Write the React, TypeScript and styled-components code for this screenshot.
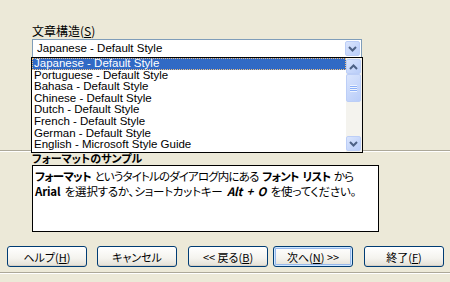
import React from 'react'
import styled, { createGlobalStyle } from 'styled-components'

const GlobalStyle = createGlobalStyle`
	html, body {
		margin: 0;
		padding: 0;
		background: #ece9d8;
	}
	body {
		font-family: 'Liberation Sans', 'Noto Sans CJK JP', sans-serif;
		font-size: 12px;
		color: #000;
	}
`

const styles = [
	'Japanese - Default Style',
	'Portuguese - Default Style',
	'Bahasa - Default Style',
	'Chinese - Default Style',
	'Dutch - Default Style',
	'French - Default Style',
	'German - Default Style',
	'English - Microsoft Style Guide'
]

const Chevron = ({ up }: { up?: boolean }) => (
	<svg width="9" height="6" viewBox="0 0 9 6">
		<path
			d={up ? 'M1 5 L4.5 1.5 L8 5' : 'M1 1 L4.5 4.5 L8 1'}
			fill="none"
			stroke="#4d6185"
			strokeWidth="2"
		/>
	</svg>
)

export default function App() {
	return (
		<Page>
			<GlobalStyle />
			<FieldLabel>
				文章構造(<u>S</u>)
			</FieldLabel>
			<Combo>
				<ComboText>Japanese - Default Style</ComboText>
				<ScrollButton>
					<Chevron />
				</ScrollButton>
				<DropList>
					<Items>
						{styles.map((s, i) => (
							<Item key={s} $selected={i === 0}>
								{s}
							</Item>
						))}
					</Items>
					<ScrollBar>
						<ScrollButton>
							<Chevron up />
						</ScrollButton>
						<Thumb>
							<Grip />
						</Thumb>
						<Track />
						<ScrollButton>
							<Chevron />
						</ScrollButton>
					</ScrollBar>
				</DropList>
			</Combo>
			<Separator $top={92} />
			<SampleLabel>フォーマットのサンプル</SampleLabel>
			<SampleBox>
				<SampleLine $tracking={-0.85}>
					<b>フォーマット</b> というタイトルのダイアログ内にある <b>フォント リスト</b> から
				</SampleLine>
				<SampleLine $tracking={-0.2}>
					<b>Arial</b> を選択するか、ショートカットキー <b><i>Alt + O</i></b> を使ってください。
				</SampleLine>
			</SampleBox>
			<ButtonRow>
				<Button>
					ヘルプ(<u>H</u>)
				</Button>
				<Button>キャンセル</Button>
				<ButtonGroup>
					<Button>
						&lt;&lt; 戻る(<u>B</u>)
					</Button>
					<Button $default>
						次へ(<u>N</u>) &gt;&gt;
					</Button>
				</ButtonGroup>
				<Button>
					終了(<u>F</u>)
				</Button>
			</ButtonRow>
			<Separator $top={5} />
		</Page>
	)
}

const Page = styled.div`
	width: 450px;
	height: 282px;
	overflow: hidden;
	padding-top: 24px;
	box-sizing: border-box;
	display: flex;
	flex-direction: column;
`

const FieldLabel = styled.div`
	margin-left: 32px;
	height: 14px;
	line-height: 14px;
	font-family: 'Noto Sans CJK JP', sans-serif;
	font-size: 12px;
`

const Combo = styled.div`
	position: relative;
	margin: 1px 0 0 32px;
	width: 330px;
	height: 19px;
	box-sizing: border-box;
	border: 1px solid #7f9db9;
	background: #fff;
	display: flex;
	align-items: center;
	padding: 1px;
`

const ComboText = styled.div`
	flex: 1;
	padding-left: 3px;
	font-size: 11.5px;
	line-height: 15px;
`

const ScrollButton = styled.div`
	width: 15px;
	height: 15px;
	box-sizing: border-box;
	border: 1px solid #bccef7;
	border-radius: 2px;
	background: linear-gradient(135deg, #dae5fd, #b9cdf9);
	display: flex;
	align-items: center;
	justify-content: center;
	flex: none;
`

const DropList = styled.div`
	position: absolute;
	top: 17px;
	left: -2px;
	width: 332px;
	height: 96px;
	box-sizing: border-box;
	border: 1px solid #000;
	background: #fff;
	display: flex;
	z-index: 2;
`

const Items = styled.div`
	flex: 1;
	overflow: hidden;
`

const Item = styled.div<{ $selected?: boolean }>`
	height: 11.6px;
	line-height: 11.6px;
	font-size: 11.5px;
	padding-left: 2px;
	white-space: nowrap;
	background: ${p => (p.$selected ? '#316ac5' : 'transparent')};
	color: ${p => (p.$selected ? '#fff' : '#000')};
	outline: ${p => (p.$selected ? '1px dotted #f0c080' : 'none')};
	outline-offset: -1px;
`

const ScrollBar = styled.div`
	width: 16px;
	padding: 1px 1px 1px 0;
	box-sizing: border-box;
	background: #f4f3ee;
	display: flex;
	flex-direction: column;
`

const Thumb = styled(ScrollButton)`
	height: 28px;
`

const Grip = styled.div`
	width: 7px;
	height: 7px;
	background: repeating-linear-gradient(
		to bottom,
		#eef4fe 0,
		#eef4fe 1px,
		#8cb0f8 1px,
		#8cb0f8 2px
	);
`

const Track = styled.div`
	flex: 1;
`

const Separator = styled.div<{ $top: number }>`
	margin-top: ${p => p.$top}px;
	border-top: 1px solid #aca899;
	border-bottom: 1px solid #fff;
	height: 0;
`

const SampleLabel = styled.div`
	margin-left: 32px;
	height: 12px;
	line-height: 12px;
	font-family: 'Noto Sans CJK JP', sans-serif;
	font-weight: bold;
	font-size: 11px;
	font-feature-settings: 'palt';
`

const SampleBox = styled.div`
	margin: 1px 0 0 32px;
	width: 347px;
	height: 67px;
	box-sizing: border-box;
	border: 1px solid #000;
	background: #fff;
	padding: 3px 2px;
`

const SampleLine = styled.div<{ $tracking: number }>`
	line-height: 15px;
	font-size: 11.5px;
	letter-spacing: ${p => p.$tracking}px;
	word-spacing: 2px;
	white-space: nowrap;
	font-family: 'Noto Sans CJK JP', sans-serif;
	font-feature-settings: 'palt';
`

const ButtonRow = styled.div`
	margin-top: 14px;
	padding-left: 7px;
	display: flex;
	gap: 10px;
`

const ButtonGroup = styled.div`
	display: flex;
	gap: 5px;
	margin: 0 1px;
`

const Button = styled.div<{ $default?: boolean }>`
	width: 80px;
	height: 21px;
	box-sizing: border-box;
	border: 1px solid #003c74;
	border-radius: 3px;
	background: linear-gradient(to bottom, #fff 0%, #f4f3ee 60%, #e3e0d6 100%);
	box-shadow: ${p =>
		p.$default ? 'inset 0 0 0 1px #cee7ff, inset 0 0 0 2px #98b8ea' : 'inset 0 -1px 0 #d6d0c5'};
	display: flex;
	align-items: center;
	justify-content: center;
	font-family: 'Noto Sans CJK JP', sans-serif;
	font-size: 11px;
	font-feature-settings: 'palt';
	padding-top: 1px;
`
